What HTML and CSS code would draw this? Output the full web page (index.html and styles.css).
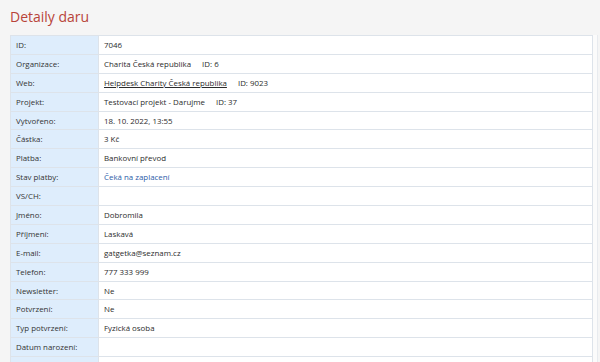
FILE: index.html
```html
<!DOCTYPE html>
<html lang="cs">
<head>
<meta charset="utf-8">
<link rel="stylesheet" href="styles.css">
</head>
<body>
<div class="page">
  <h1 class="title">Detaily daru</h1>
  <table class="details">
    <tr><th>ID:</th><td>7046</td></tr>
    <tr><th>Organizace:</th><td>Charita Česká republika<span class="id">ID: 6</span></td></tr>
    <tr><th>Web:</th><td><a class="ulink" href="#">Helpdesk Charity Česká republika</a><span class="id">ID: 9023</span></td></tr>
    <tr><th>Projekt:</th><td>Testovací projekt - Darujme<span class="id">ID: 37</span></td></tr>
    <tr><th>Vytvořeno:</th><td>18. 10. 2022, 13:55</td></tr>
    <tr><th>Částka:</th><td>3 Kč</td></tr>
    <tr><th>Platba:</th><td>Bankovní převod</td></tr>
    <tr><th>Stav platby:</th><td><span class="status">Čeká na zaplacení</span></td></tr>
    <tr><th>VS/CH:</th><td></td></tr>
    <tr><th>Jméno:</th><td>Dobromila</td></tr>
    <tr><th>Příjmení:</th><td>Laskavá</td></tr>
    <tr><th>E-mail:</th><td>gatgetka@seznam.cz</td></tr>
    <tr><th>Telefon:</th><td>777 333 999</td></tr>
    <tr><th>Newsletter:</th><td>Ne</td></tr>
    <tr><th>Potvrzení:</th><td>Ne</td></tr>
    <tr><th>Typ potvrzení:</th><td>Fyzická osoba</td></tr>
    <tr><th>Datum narození:</th><td></td></tr>
    <tr><th>&nbsp;</th><td></td></tr>
  </table>
</div>
</body>
</html>
```
FILE: styles.css
```css
html, body {
  margin: 0;
  padding: 0;
  background: #f5f5f5;
}
body {
  font-family: "Open Sans", "Noto Sans", sans-serif;
  color: #333;
  overflow: hidden;
}
.page {
  padding: 7px 7px 0 10px;
}
.title {
  margin: 0 0 8px 0;
  font-weight: 400;
  font-size: 14px;
  line-height: 20px;
  color: #b8443a;
}
.details {
  width: 100%;
  border-collapse: collapse;
  background: #fff;
  font-size: 7.9px;
  box-shadow: 4px 0 0 #fbfbfb, 5px 0 0 #e8ebef;
}
.details th, .details td {
  border: 1px solid #dde3ea;
  height: 17.9px;
  padding: 0 5px;
  text-align: left;
  font-weight: 400;
  vertical-align: middle;
  white-space: nowrap;
}
.details th {
  width: 77px;
  background: #deedfc;
  color: #333;
}
.details td {
  color: #2b2b2b;
}
.id {
  margin-left: 11px;
}
.ulink {
  color: #2b2b2b;
  text-decoration: underline;
}
.status {
  color: #2b5ca8;
}
```
